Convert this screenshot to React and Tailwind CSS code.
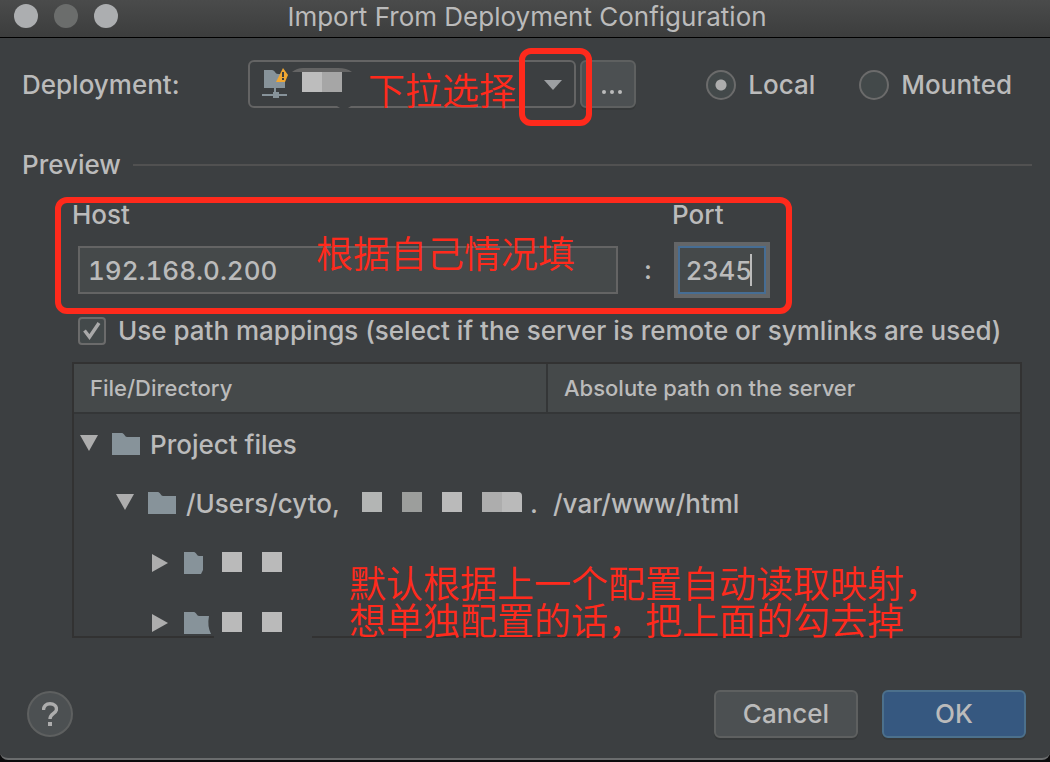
import React from "react";

function Folder({ className = "", d = "M0 0h10c2 0 3 4 5 4h13v18H0z" }) {
  return (
    <svg className={`h-[22px] w-7 shrink-0 ${className}`} viewBox="0 0 28 22" fill="#87939a" aria-hidden="true">
      <path d={d} />
    </svg>
  );
}

function Arrow({ open }) {
  return (
    <svg className="h-[22px] w-[18px] shrink-0" viewBox="0 0 18 22" fill="#adadad" aria-hidden="true">
      <path d={open ? "M0 2h18L9 18z" : "M2 2v18L18 11z"} />
    </svg>
  );
}

function Block({ className = "bg-[#bababa]" }) {
  return <span className={`mb-0.5 h-5 w-5 shrink-0 ${className}`} />;
}

function Note({ className, children }) {
  return (
    <div
      className={`pointer-events-none absolute whitespace-nowrap font-['Noto_Sans_CJK_SC',sans-serif] text-[37px] leading-[37px] font-[350] text-[#ff2a1c] ${className}`}
    >
      {children}
    </div>
  );
}

function Radio({ label, defaultChecked }) {
  return (
    <label className="flex items-center gap-3">
      <input
        type="radio"
        name="mode"
        defaultChecked={defaultChecked}
        className="h-[30px] w-[30px] appearance-none rounded-full border-2 border-[#6b6b6b] bg-[#43494a] checked:bg-[radial-gradient(circle,#adadad_5px,#43494a_6px)]"
      />
      {label}
    </label>
  );
}

export default function App() {
  return (
    <div className="flex min-h-screen flex-col bg-[#0c0c0d] pb-0.5 font-['Inter',sans-serif] text-[26px] leading-8 font-medium text-[#bbbbbb]">
      <main className="flex flex-1 flex-col rounded-b-lg border-b-2 border-[#6a6c6d] bg-[#3c3f41]">
        <header className="relative flex h-[38px] items-start justify-center border-b border-black bg-linear-to-b from-[#4a4b4b] to-[#3c3d3d] pt-px pl-1">
          <div className="absolute top-1 left-3.5 flex gap-4">
            <span className="h-6 w-6 rounded-full bg-[#acaeb0]" />
            <span className="h-6 w-6 rounded-full bg-[#6b6d6c]" />
            <span className="h-6 w-6 rounded-full bg-[#acaeb0]" />
          </div>
          <h1 className="font-normal">Import From Deployment Configuration</h1>
        </header>

        <section className="flex h-[70px] items-end pr-[38px] pl-[22px]">
          <label htmlFor="deployment" className="w-[226px] pb-[7px]">
            Deployment:
          </label>
          <div className="relative flex h-12 flex-1">
            <select
              id="deployment"
              className="h-12 w-full appearance-none rounded-md border-2 border-[#646464] bg-[#3c3f41]"
            >
              <option></option>
            </select>
            <svg className="pointer-events-none absolute top-0 left-0 h-12 w-28" viewBox="0 0 112 48" aria-hidden="true">
              <path d="M16 10h8c3 0 3 4 6 4h7v14H16z" fill="#87939a" />
              <path d="M26 28h2v4h3v2h8v2h-8v2h-6v-2H14v-2h11v-2h1z" fill="#87939a" />
              <path d="M35 8L40 15L37 22H28z" fill="#f0a732" />
              <path d="M34 12h2v5h-2zM34 18h2v2h-2z" fill="#3c3f41" />
              <path d="M44 12Q49 8 55 8H90Q99 8 104 12z" fill="#646464" />
              <path d="M54 12h20v20H54z" fill="#bdbdbd" />
              <path d="M74 12h20v20H74z" fill="#a6a6a6" />
              <path d="M89 46h14l-3 2h-8z" fill="#3c3f41" />
            </svg>
            <svg className="pointer-events-none absolute top-5 right-3.5 h-2.5 w-[18px]" viewBox="0 0 18 10" fill="#9da0a3" aria-hidden="true">
              <path d="M0 0h18L9 10z" />
            </svg>
            <Note className="top-[11px] left-[120px]">下拉选择</Note>
            <div className="pointer-events-none absolute -top-3 -right-4 z-10 h-[78px] w-[73px] rounded-xl border-6 border-[#ff2a1c]" />
          </div>
          <button
            aria-label="Browse deployments"
            className="ml-1 flex h-12 w-14 items-center justify-center gap-1 rounded-md border-2 border-[#5e6060] bg-[#4c5052] pt-4 pl-2 shadow-[0_2px_0_#36393a]"
          >
            <span className="h-1 w-1 rounded-full bg-[#bbbbbb]" />
            <span className="h-1 w-1 rounded-full bg-[#bbbbbb]" />
            <span className="h-1 w-1 rounded-full bg-[#bbbbbb]" />
          </button>
          <div className="ml-[70px] flex gap-11 pb-[7px]">
            <Radio label="Local" defaultChecked />
            <Radio label="Mounted" />
          </div>
        </section>

        <div className="mt-[41px] flex h-8 items-center gap-3 pr-[18px] pl-[22px]">
          <h2>Preview</h2>
          <span className="h-0.5 flex-1 bg-[#515151]" />
        </div>

        <section className="relative mt-4 mr-[258px] ml-[55px] flex pt-0.5 pr-[22px] pb-5 pl-[17px]">
          <div className="flex flex-1 flex-col">
            <label htmlFor="host">Host</label>
            <input
              id="host"
              defaultValue="192.168.0.200"
              className="mt-[15px] ml-1.5 h-12 border-2 border-[#646464] bg-[#45494a] px-2 tabular-nums outline-none"
            />
          </div>
          <span className="w-[54px] self-end pb-2 pl-1.5 text-center">:</span>
          <div className="relative flex w-[98px] flex-col">
            <label htmlFor="port">Port</label>
            <input
              id="port"
              defaultValue="2345"
              className="mt-[15px] ml-1.5 h-12 w-[88px] border-2 border-[#466d94] bg-[#45494a] pl-1.5 shadow-[0_0_0_4px_#646668] outline-none"
            />
            <span className="absolute right-[18px] bottom-2 h-8 w-0.5 bg-[#bbbbbb]" />
          </div>
          <div className="pointer-events-none absolute inset-0 rounded-xl border-6 border-[#ff2a1c]" />
          <Note className="top-[37px] left-[261px]">根据自己情况填</Note>
        </section>

        <label className="mt-0.5 ml-[78px] flex h-[30px] items-center gap-3 whitespace-nowrap">
          <span className="relative flex h-7 w-7 shrink-0">
            <input
              type="checkbox"
              defaultChecked
              className="h-7 w-7 appearance-none rounded border-2 border-[#6b6b6b] bg-[#43494a]"
            />
            <svg className="pointer-events-none absolute inset-0 h-7 w-7" viewBox="0 0 28 28" fill="none" stroke="#a9a9a9" strokeWidth="3.4" aria-hidden="true">
              <path d="M6.500 13.500L11.500 20L21 6" />
            </svg>
          </span>
          Use path mappings (select if the server is remote or symlinks are used)
        </label>

        <section className="relative mt-4 mr-7 ml-[72px] h-[276px] border-2 border-[#323232]">
          <table className="w-full table-fixed border-collapse text-left">
            <thead className="bg-[#45494a] text-[22px]">
              <tr className="h-[49px] border-b-2 border-[#343637]">
                <th className="border-r-2 border-[#343637] pl-4 font-medium">File/Directory</th>
                <th className="pl-4 font-medium">Absolute path on the server</th>
              </tr>
            </thead>
            <tbody>
              <tr className="h-[60px]">
                <td colSpan={2} className="pl-1.5">
                  <div className="flex items-center">
                    <Arrow open />
                    <Folder className="ml-3.5" />
                    <span className="ml-2.5 pt-0.5">Project files</span>
                  </div>
                </td>
              </tr>
              <tr className="h-[60px]">
                <td className="pl-[42px]">
                  <div className="flex items-center whitespace-nowrap">
                    <Arrow open />
                    <Folder className="ml-3.5" />
                    <span className="ml-2.5 w-[150px] pt-0.5">/Users/cyto,</span>
                    <span className="ml-[26px] flex gap-5">
                      <Block className="bg-[#b3b5b4]" />
                      <Block className="bg-[#9c9e9c]" />
                      <Block />
                      <span className="flex">
                        <Block className="bg-[#adadad]" />
                        <Block className="rounded-tr bg-[#bababa]" />
                      </span>
                    </span>
                    <span className="ml-2 pt-0.5">.</span>
                  </div>
                </td>
                <td className="pt-0.5 pl-1.5">/var/www/html</td>
              </tr>
              <tr className="h-[60px]">
                <td colSpan={2} className="pl-[76px]">
                  <div className="flex items-center">
                    <Arrow />
                    <Folder className="ml-4" d="M0 0h10c2 0 3 4 5 4h4v14l-2 4H0z" />
                    <span className="ml-2.5 flex gap-5">
                      <Block />
                      <Block />
                    </span>
                  </div>
                </td>
              </tr>
              <tr className="h-[60px]">
                <td colSpan={2} className="pl-[76px]">
                  <div className="flex items-center">
                    <Arrow />
                    <Folder className="ml-4" d="M0 0h10c2 0 3 4 5 4h10q-2 10 2 18H0z" />
                    <span className="ml-2.5 flex gap-5">
                      <Block />
                      <Block />
                    </span>
                  </div>
                </td>
              </tr>
            </tbody>
          </table>
          <span className="absolute -bottom-0.5 left-[140px] h-0.5 w-[98px] bg-[#3c3f41]" />
          <Note className="top-[200px] left-[275px]">
            默认根据上一个配置自动读取映射，
            <br />
            想单独配置的话，把上面的勾去掉
          </Note>
        </section>

        <footer className="mt-auto flex items-center gap-6 pt-8 pr-6 pb-5 pl-[27px]">
          <button
            aria-label="Help"
            className="mr-auto flex h-[46px] w-[46px] items-center justify-center rounded-full border-2 border-[#5e6060] bg-[#4c5052]"
          >
            <svg className="h-6 w-4" viewBox="0 0 16 24" aria-hidden="true">
              <path d="M1.500 8C1.500 4 4 1.800 8 1.800S14.500 4 14.500 7.200C14.500 11.500 8 11.500 8 17" fill="none" stroke="#adadad" strokeWidth="3.400" />
              <path d="M6 20h4v4H6z" fill="#adadad" />
            </svg>
          </button>
          <button className="h-12 w-36 rounded-md border-2 border-[#5e6060] bg-[#4c5052] shadow-[0_2px_0_#36393a]">
            Cancel
          </button>
          <button className="h-12 w-36 rounded-md border-2 border-[#4c708c] bg-[#365880] shadow-[0_2px_0_#36393a]">
            OK
          </button>
        </footer>
      </main>
    </div>
  );
}
